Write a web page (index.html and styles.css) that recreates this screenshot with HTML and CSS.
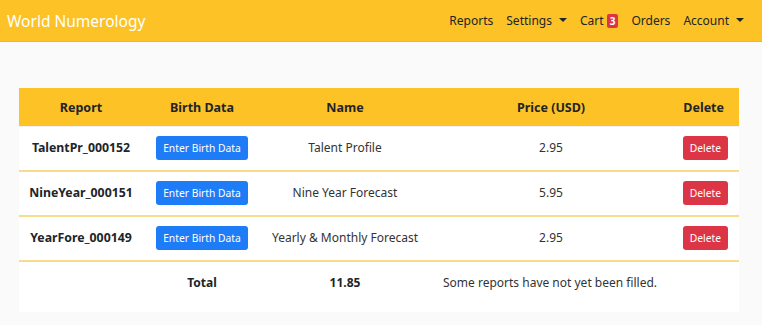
FILE: index.html
```
<!DOCTYPE html>
<html lang="en">
<head>
    <meta charset="UTF-8">
    <meta name="viewport" content="width=device-width, initial-scale=1.0">
    <title>World Numerology - Cart</title>
    <link rel="stylesheet" href="styles.css">
</head>
<body>
    <nav class="navbar">
        <a class="brand" href="#">World Numerology</a>
        <ul class="nav-links">
            <li><a href="#">Reports</a></li>
            <li><a href="#" class="dropdown">Settings</a></li>
            <li><a href="#">Cart <span class="badge">3</span></a></li>
            <li><a href="#">Orders</a></li>
            <li><a href="#" class="dropdown">Account</a></li>
        </ul>
    </nav>

    <main class="cart-card">
        <table class="cart-table">
            <colgroup>
                <col class="col-report">
                <col class="col-birth">
                <col class="col-name">
                <col class="col-price">
                <col class="col-delete">
            </colgroup>
            <thead>
                <tr>
                    <th>Report</th>
                    <th>Birth Data</th>
                    <th>Name</th>
                    <th>Price (USD)</th>
                    <th class="cell-delete">Delete</th>
                </tr>
            </thead>
            <tbody>
                <tr>
                    <td class="report-id">TalentPr_000152</td>
                    <td><button class="btn btn-blue">Enter Birth Data</button></td>
                    <td>Talent Profile</td>
                    <td>2.95</td>
                    <td class="cell-delete"><button class="btn btn-red">Delete</button></td>
                </tr>
                <tr>
                    <td class="report-id">NineYear_000151</td>
                    <td><button class="btn btn-blue">Enter Birth Data</button></td>
                    <td>Nine Year Forecast</td>
                    <td>5.95</td>
                    <td class="cell-delete"><button class="btn btn-red">Delete</button></td>
                </tr>
                <tr>
                    <td class="report-id">YearFore_000149</td>
                    <td><button class="btn btn-blue">Enter Birth Data</button></td>
                    <td>Yearly &amp; Monthly Forecast</td>
                    <td>2.95</td>
                    <td class="cell-delete"><button class="btn btn-red">Delete</button></td>
                </tr>
            </tbody>
            <tfoot>
                <tr>
                    <td></td>
                    <td class="total">Total</td>
                    <td class="total">11.85</td>
                    <td colspan="2" class="notice">Some reports have not yet been filled.</td>
                </tr>
            </tfoot>
        </table>
    </main>
</body>
</html>
```

FILE: styles.css
```
body {
    font-family: 'Noto Sans', 'Open Sans', sans-serif;
    margin: 0;
    background-color: #fafafa;
    color: #212529;
}

a {
    text-decoration: none;
    color: inherit;
}

.navbar {
    display: flex;
    justify-content: space-between;
    align-items: center;
    height: 41px;
    padding: 0 18px 0 7px;
    background-color: #fcc226;
    border-bottom: 1px solid #f3b61a;
}

.brand {
    color: #fff;
    font-size: 15.5px;
}

.nav-links {
    display: flex;
    gap: 13px;
    list-style: none;
    margin: 0;
    padding: 0;
    font-size: 12px;
}

.dropdown::after {
    content: '';
    display: inline-block;
    margin-left: 7px;
    vertical-align: 3px;
    border-top: 4px solid #212529;
    border-left: 4px solid transparent;
    border-right: 4px solid transparent;
}

.badge {
    display: inline-block;
    background-color: #dc3545;
    color: #fff;
    font-size: 10px;
    font-weight: bold;
    line-height: 14px;
    padding: 0 3px;
    border-radius: 2px;
    vertical-align: 0;
}

.cart-card {
    width: 720px;
    margin: 46px 0 0 19px;
    padding-bottom: 7px;
    background-color: #fff;
}

.cart-table {
    width: 100%;
    border-collapse: collapse;
    table-layout: fixed;
    font-size: 12px;
}

.col-report { width: 124px; }
.col-birth { width: 118px; }
.col-name { width: 168px; }
.col-price { width: 244px; }
.col-delete { width: 66px; }

.cart-table th {
    height: 38px;
    padding: 0;
    background-color: #fcc226;
    font-size: 12.5px;
    font-weight: bold;
    text-align: center;
}

.cart-table td {
    height: 41px;
    padding: 0 0 2px;
    text-align: center;
    color: #333;
}

.cart-table tbody td {
    border-bottom: 2px solid #f7dc8c;
}

.cart-table tbody tr:first-child td {
    border-top: 1px solid #eef0f3;
}

.cart-table th.cell-delete {
    text-align: right;
    padding-right: 15px;
}

.cart-table td.cell-delete {
    text-align: right;
    padding-right: 11px;
}

.cart-table td.report-id {
    font-size: 12.3px;
    font-weight: bold;
    color: #212529;
}

.cart-table td.total {
    font-weight: bold;
    color: #212529;
}

.cart-table td.notice {
    text-align: left;
    padding-left: 14px;
}

.btn {
    font-family: inherit;
    font-size: 10.3px;
    color: #fff;
    border: none;
    border-radius: 3px;
    height: 24px;
    cursor: pointer;
}

.btn-blue {
    background-color: #1f7cf7;
    padding: 0 7px;
}

.btn-red {
    background-color: #dc3545;
    padding: 0 7px;
}
```
